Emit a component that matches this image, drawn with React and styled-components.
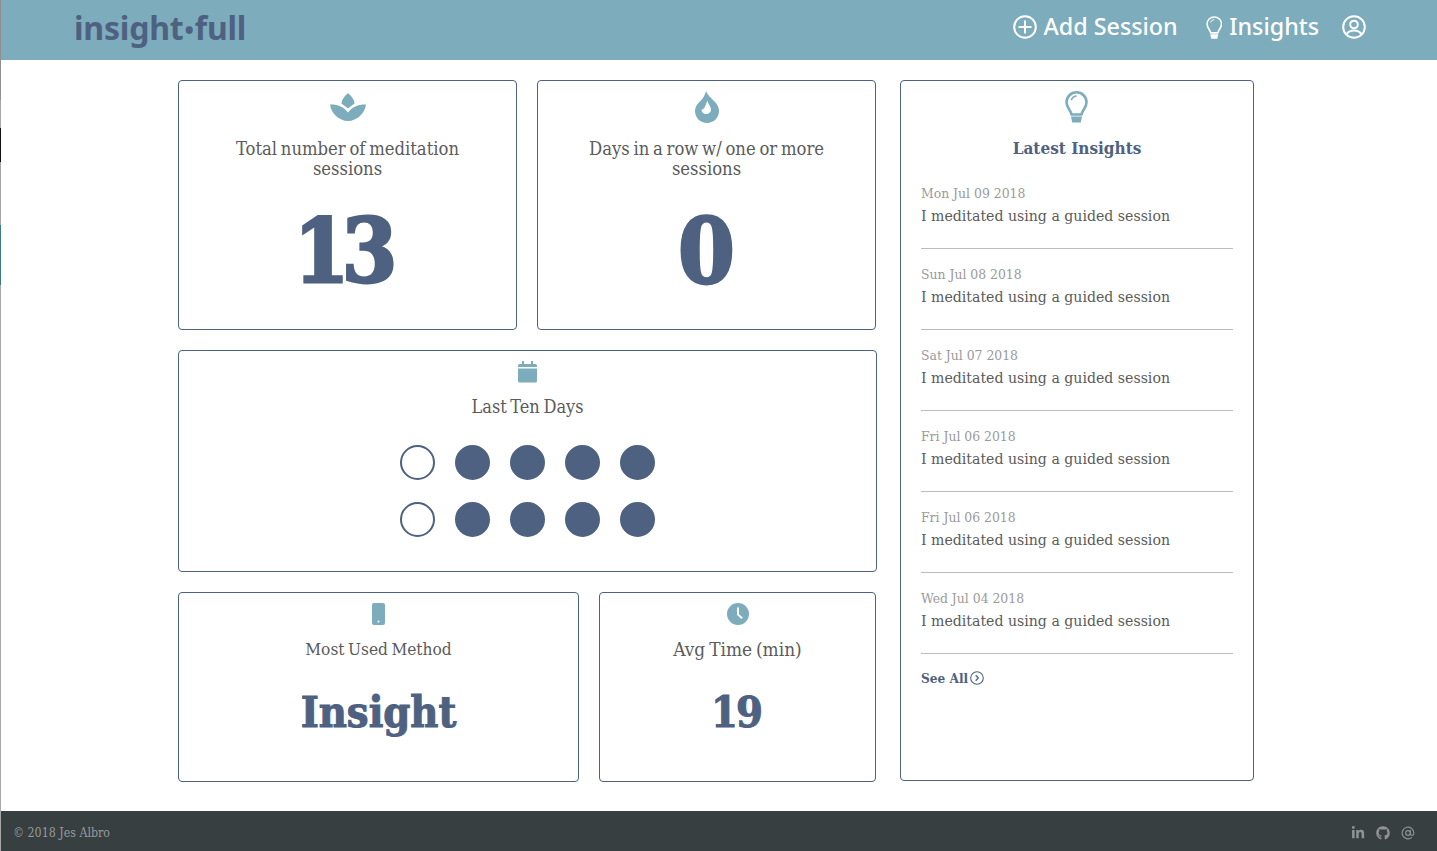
import React from 'react';
import styled, { createGlobalStyle } from 'styled-components';
import { FaLinkedinIn, FaGithub } from 'react-icons/fa';
import { FiAtSign } from 'react-icons/fi';

const NAVY = '#4e6180';
const TEAL = '#7dacbc';
const SLAB = '"DejaVu Serif Condensed", "DejaVu Serif", serif';

const Global = createGlobalStyle`
  html, body { margin: 0; padding: 0; background: #fff; }
  body { font-family: ${SLAB}; color: #5b5b5b; }
  * { box-sizing: border-box; }
  body::before {
    content: '';
    position: fixed;
    left: 0; top: 0; bottom: 0;
    width: 1px;
    z-index: 5;
    background: linear-gradient(to bottom,
      #8f8f8f 0, #8f8f8f 100px, #a8a8a8 100px, #a8a8a8 128px,
      #111 128px, #111 162px, #a5a5a5 162px, #a5a5a5 225px,
      #3f7882 225px, #3f7882 285px, #a8a8a8 285px, #a8a8a8 100%);
  }
`;

const Page = styled.div`
  min-height: 851px;
  display: flex;
  flex-direction: column;
`;
const Header = styled.header`
  height: 60px;
  background: ${TEAL};
  display: flex;
  align-items: center;
  padding: 0 71px 0 74px;
`;
const Logo = styled.div`
  font-family: "Noto Sans", sans-serif;
  font-weight: 700;
  font-size: 32px;
  line-height: 40px;
  letter-spacing: -0.2px;
  color: ${NAVY};
  margin-top: -3px;
  flex: 1;
`;
const LogoDot = styled.span`
  font-size: 25px;
  margin: 0 1px;
  vertical-align: 1px;
`;
const Nav = styled.nav`
  display: flex;
  align-items: center;
  gap: 28px;
  margin-top: -6px;
`;
const NavLink = styled.a`
  display: flex;
  align-items: center;
  gap: 7px;
  color: #fff;
  font-family: "Noto Sans", sans-serif;
  font-weight: 500;
  font-size: 23.3px;
  line-height: 30px;
  svg { display: block; }
`;
const ProfileLink = styled(NavLink)`
  margin-left: -5px;
`;
const NavText = styled.span`
  margin-top: -2px;
`;
const Main = styled.main`
  flex: 1;
  display: flex;
  align-items: flex-start;
  gap: 23px;
  padding: 20px 0 0 178px;
`;
const LeftColumn = styled.div`
  width: 699px;
  display: flex;
  flex-direction: column;
  gap: 20px;
`;
const Row = styled.div`
  display: grid;
  grid-template-columns: ${p => p.$cols};
  gap: 20px;
`;
const Card = styled.section`
  border: 1px solid ${NAVY};
  border-radius: 4px;
  height: ${p => p.$h}px;
  display: flex;
  flex-direction: column;
  align-items: center;
  background: #fff;
`;
const IconSlot = styled.div`
  height: 32px;
  margin-top: ${p => p.$top ?? 10}px;
  display: flex;
  align-items: center;
  justify-content: center;
  color: ${TEAL};
  svg { display: block; }
`;
const Title = styled.h2`
  margin: ${p => p.$mt ?? 16}px 0 0;
  font-weight: 400;
  font-size: ${p => p.$fs ?? 18.3}px;
  word-spacing: -1.5px;
  line-height: 20px;
  color: #5b5b5b;
  text-align: center;
  width: 270px;
`;
const BigNumber = styled.div`
  margin: ${p => p.$mt}px ${p => p.$shift ?? 0}px 0 0;
  font-weight: 700;
  font-size: ${p => p.$size}px;
  line-height: ${p => p.$size}px;
  letter-spacing: ${p => p.$ls ?? 0}px;
  -webkit-text-stroke: ${p => p.$stroke ?? 0}px ${NAVY};
  color: ${NAVY};
`;
const DayGrid = styled.div`
  margin-top: 28px;
  display: grid;
  grid-template-columns: repeat(5, 35px);
  gap: 22px 20px;
`;
const Day = styled.span`
  width: 35px;
  height: 35px;
  border-radius: 50%;
  border: 2px solid ${NAVY};
  background: ${p => (p.$done ? NAVY : '#fff')};
`;
const InsightsCard = styled.aside`
  width: 354px;
  height: 701px;
  border: 1px solid ${NAVY};
  border-radius: 4px;
  padding: 0 20px;
  display: flex;
  flex-direction: column;
`;
const InsightsHead = styled.div`
  display: flex;
  flex-direction: column;
  align-items: center;
`;
const InsightsTitle = styled.h2`
  margin: 15px 0 0;
  font-weight: 700;
  font-size: 17px;
  line-height: 20px;
  color: ${NAVY};
`;
const InsightList = styled.ul`
  list-style: none;
  margin: 10px 0 0;
  padding: 0;
`;
const InsightRow = styled.li`
  height: 81px;
  padding-top: 15px;
  border-bottom: 1px solid #bcbcbc;
`;
const DateText = styled.div`
  font-size: 13.8px;
  line-height: 20px;
  color: #9a9a9a;
`;
const InsightText = styled.div`
  margin-top: 3px;
  font-size: 15.7px;
  line-height: 20px;
  color: #5b5b5b;
`;
const SeeAll = styled.a`
  margin-top: 14px;
  display: flex;
  align-items: center;
  gap: 2px;
  font-weight: 700;
  font-size: 13.5px;
  line-height: 20px;
  color: ${NAVY};
`;
const Footer = styled.footer`
  height: 40px;
  background: #373f41;
  display: flex;
  align-items: center;
  justify-content: space-between;
  padding: 4px 22px 0 13px;
  color: #9a9a9a;
  font-size: 12.3px;
`;
const Social = styled.div`
  display: flex;
  align-items: center;
  gap: 11px;
  font-size: 14px;
  color: #8f9393;
  svg { display: block; }
`;

const Lotus = () => (
  <svg width="36" height="28" viewBox="0 0 36 28" fill="currentColor">
    <path d="M18 0C15 3 11.500 6.500 11.500 10.500L18 15.500L24.500 10.500C24.500 6.500 21 3 18 0Z" />
    <path d="M0 11.500C6 11 14 13.500 18 19.500C22 13.500 30 11 36 11.500C35 20 27 28 18 28C9 28 1 20 0 11.500Z" />
  </svg>
);
const Flame = () => (
  <svg width="24" height="32" viewBox="0 0 24 32" fill="currentColor">
    <path fillRule="evenodd" d="M11 0C12 3 16 7 20 11C22.500 13.500 24 17 24 20C24 27 18.500 32 12 32C5.500 32 0 27 0 20C0 16 2 13 5 10.500C8 8 10 4 11 0ZM12.500 9.500C11 13 10.500 15 9.500 16.500C8.500 18 7.500 18.500 6.500 18.500C6.500 21 8.500 23 11 23C14 23 16 21 16 18.500C16 15 13 13.500 12.500 9.500Z" />
  </svg>
);
const Calendar = () => (
  <svg width="19" height="22" viewBox="0 0 19 22" fill="currentColor">
    <path d="M4 0h2v3h7V0h2v3h2.500A1.500 1.500 0 0 1 19 4.500V6H0V4.500A1.500 1.500 0 0 1 1.500 3H4Z" />
    <path d="M0 7.500h19V20a1.500 1.500 0 0 1-1.500 1.500h-16A1.500 1.500 0 0 1 0 20Z" />
  </svg>
);
const Phone = () => (
  <svg width="13" height="22" viewBox="0 0 13 22" fill="currentColor">
    <path fillRule="evenodd" d="M2 0h9a2 2 0 0 1 2 2v18a2 2 0 0 1-2 2H2a2 2 0 0 1-2-2V2a2 2 0 0 1 2-2ZM6.500 17.500a1 1 0 1 0 0 2a1 1 0 0 0 0-2Z" />
  </svg>
);
const Clock = () => (
  <svg width="22" height="22" viewBox="0 0 22 22" fill="currentColor">
    <path fillRule="evenodd" d="M11 0a11 11 0 1 1 0 22a11 11 0 0 1 0-22ZM10 4.500V12l4.500 4l1.300-1.400L12 11.200V4.500Z" />
  </svg>
);
const Bulb = ({ size = 32, sw = 2.6 }) => (
  <svg width={size * 0.72} height={size} viewBox="0 0 23 32" fill="none" stroke="currentColor" strokeWidth={sw}>
    <path d="M6.500 23.500C6 19.500 1.500 17 1.500 11.300A10 10 0 0 1 21.500 11.300C21.500 17 17 19.500 16.500 23.500Z" strokeLinejoin="round" />
    <path d="M6.500 8.500A5.500 5.500 0 0 1 11 5" strokeWidth={sw * 0.6} strokeLinecap="round" />
    <path d="M6 25.500h11L15.800 31.500H7.200Z" fill="currentColor" stroke="none" />
  </svg>
);
const PlusCircle = () => (
  <svg width="24" height="24" viewBox="0 0 24 24" fill="none" stroke="currentColor" strokeWidth="2">
    <circle cx="12" cy="12" r="10.800" />
    <path d="M12 5.500v13M5.500 12h13" />
  </svg>
);
const UserCircle = () => (
  <svg width="24" height="24" viewBox="0 0 24 24" fill="none" stroke="currentColor" strokeWidth="2">
    <circle cx="12" cy="12" r="10.800" />
    <circle cx="12" cy="9.500" r="3.800" />
    <path d="M4.500 19.500C6 16.500 9 15.500 12 15.500S18 16.500 19.500 19.500" />
  </svg>
);
const ChevronCircle = () => (
  <svg width="14" height="14" viewBox="0 0 14 14" fill="none" stroke="currentColor" strokeWidth="1.100">
    <circle cx="7" cy="7" r="6.300" />
    <path d="M5.700 4.300L8.300 7L5.700 9.700" strokeWidth="1.300" />
  </svg>
);

const dates = ['Mon Jul 09 2018', 'Sun Jul 08 2018', 'Sat Jul 07 2018', 'Fri Jul 06 2018', 'Fri Jul 06 2018', 'Wed Jul 04 2018'];
const days = [false, true, true, true, true, false, true, true, true, true];

export default function App() {
  return (
    <Page>
      <Global />
      <Header>
        <Logo>insight<LogoDot>•</LogoDot>full</Logo>
        <Nav>
          <NavLink><PlusCircle /><NavText>Add Session</NavText></NavLink>
          <NavLink><Bulb size={23} sw={2.2} /><NavText>Insights</NavText></NavLink>
          <ProfileLink><UserCircle /></ProfileLink>
        </Nav>
      </Header>
      <Main>
        <LeftColumn>
          <Row $cols="339px 339px">
            <Card $h={250}>
              <IconSlot><Lotus /></IconSlot>
              <Title>Total number of meditation sessions</Title>
              <BigNumber $mt={28} $size={88} $ls={-7} $stroke={3} $shift={11}>13</BigNumber>
            </Card>
            <Card $h={250}>
              <IconSlot><Flame /></IconSlot>
              <Title>Days in a row w/ one or more sessions</Title>
              <BigNumber $mt={27} $size={90} $stroke={3}>0</BigNumber>
            </Card>
          </Row>
          <Card $h={222}>
            <IconSlot $top={5}><Calendar /></IconSlot>
            <Title $mt={9} $fs={18}>Last Ten Days</Title>
            <DayGrid>
              {days.map((d, i) => <Day key={i} $done={d} />)}
            </DayGrid>
          </Card>
          <Row $cols="401px 277px">
            <Card $h={190}>
              <IconSlot $top={5}><Phone /></IconSlot>
              <Title $mt={9} $fs={17.2}>Most Used Method</Title>
              <BigNumber $mt={32} $size={43} $stroke={1}>Insight</BigNumber>
            </Card>
            <Card $h={190}>
              <IconSlot $top={5}><Clock /></IconSlot>
              <Title $mt={9} $fs={18.9}>Avg Time (min)</Title>
              <BigNumber $mt={32} $size={43} $ls={-2} $stroke={1} $shift={3}>19</BigNumber>
            </Card>
          </Row>
        </LeftColumn>
        <InsightsCard>
          <InsightsHead>
            <IconSlot $top={10}><Bulb /></IconSlot>
            <InsightsTitle>Latest Insights</InsightsTitle>
          </InsightsHead>
          <InsightList>
            {dates.map((d, i) => (
              <InsightRow key={i}>
                <DateText>{d}</DateText>
                <InsightText>I meditated using a guided session</InsightText>
              </InsightRow>
            ))}
          </InsightList>
          <SeeAll>See All<ChevronCircle /></SeeAll>
        </InsightsCard>
      </Main>
      <Footer>
        <span>© 2018 Jes Albro</span>
        <Social>
          <FaLinkedinIn />
          <FaGithub />
          <FiAtSign />
        </Social>
      </Footer>
    </Page>
  );
}
